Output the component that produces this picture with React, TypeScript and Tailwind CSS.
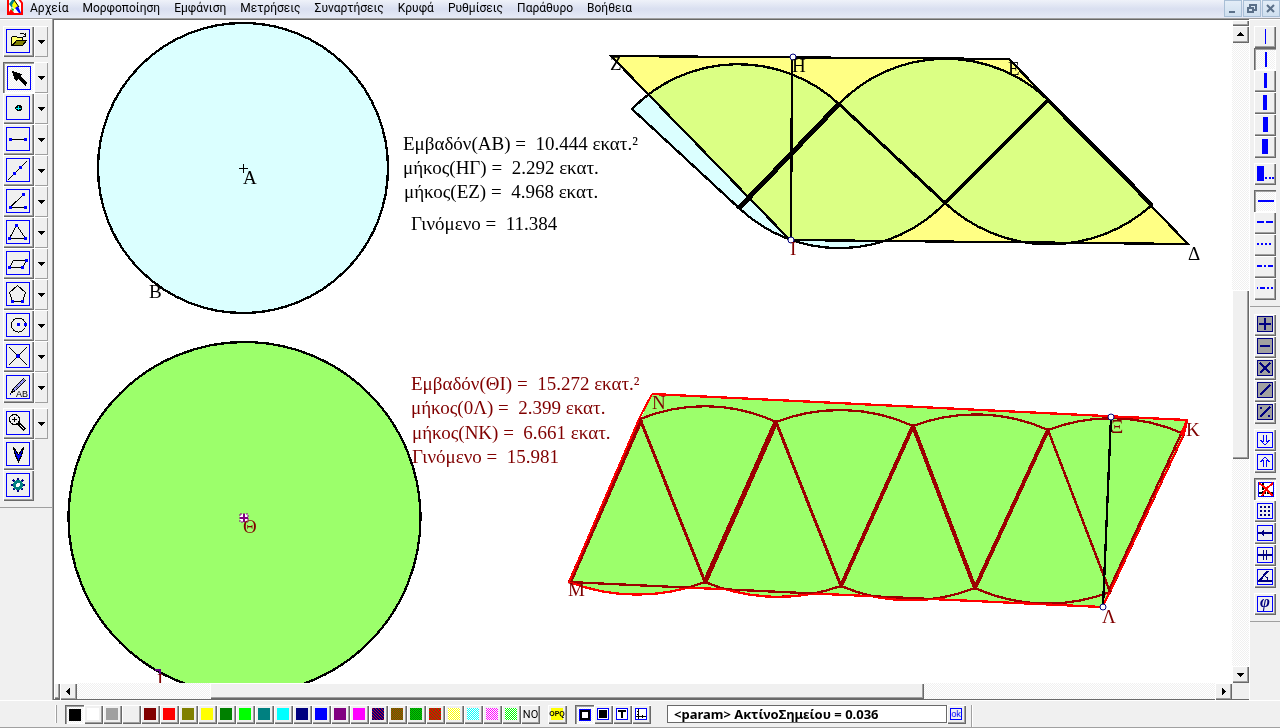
import React from "react";

const MENUS = [
  "Αρχεία",
  "Μορφοποίηση",
  "Εμφάνιση",
  "Μετρήσεις",
  "Συναρτήσεις",
  "Κρυφά",
  "Ρυθμίσεις",
  "Παράθυρο",
  "Βοήθεια",
];

const RAISED = "bg-[#f0f0f0] shadow-[inset_1px_1px_0_#fff,inset_-1px_-1px_0_#696969,inset_-2px_-2px_0_#a0a0a0]";
const PRESSED =
  "bg-[repeating-conic-gradient(#fff_0_25%,#f0f0f0_0_50%)] bg-[length:2px_2px] shadow-[inset_1px_1px_0_#696969,inset_2px_2px_0_#a0a0a0,inset_-1px_-1px_0_#fff]";
const TRACK = "bg-[repeating-conic-gradient(#fff_0_25%,#f0f0f0_0_50%)] bg-[length:2px_2px]";

function Dot({ x, y }: { x: number; y: number }) {
  return <rect x={x - 1} y={y - 1} width="3" height="3" fill="#00f" stroke="none" />;
}

type Tool = { label: string; icon: React.ReactNode; menu?: boolean; pressed?: boolean };

const FILE_TOOLS: Tool[] = [
  {
    label: "Άνοιγμα",
    menu: true,
    icon: (
      <>
        <path d="M5.500 16.500V8.500L6.500 7.500H10.500L11.500 8.500H16.500V11.500H10.500L5.500 16.500Z" fill="#ffff6b" />
        <path d="M6.500 16.500L10.500 11.500H20.500L16.500 16.500Z" fill="#808000" />
        <path d="M13.500 5.500L14.500 4.500H17.500L19.500 6.500M19.500 4V7.500M16.500 7.500H20" />
      </>
    ),
  },
];

const DRAW_TOOLS: Tool[] = [
  {
    label: "Επιλογή",
    menu: true,
    pressed: true,
    icon: <path d="M5 5L15 8L13 10L20 17L19 20L17 19L11 13L9 15L8 14Z" fill="#000" stroke="none" />,
  },
  {
    label: "Σημείο",
    menu: true,
    icon: (
      <>
        <path d="M11 9H14L16 11V13L14 15H11L9 13V11Z" fill="#000" stroke="none" />
        <path d="M12.500 10V14M10 12.500H15" stroke="#0ff" />
      </>
    ),
  },
  {
    label: "Τμήμα",
    menu: true,
    icon: (
      <>
        <path d="M4 12.500H20" />
        <Dot x={4} y={12} />
        <Dot x={19} y={12} />
      </>
    ),
  },
  {
    label: "Ευθεία",
    menu: true,
    icon: (
      <>
        <path d="M2 22L21 3" />
        <Dot x={8} y={15} />
        <Dot x={14} y={9} />
      </>
    ),
  },
  {
    label: "Γωνία",
    menu: true,
    icon: (
      <>
        <path d="M18 5L4 18.500H20" />
        <Dot x={4} y={18} />
        <Dot x={19} y={18} />
        <Dot x={17} y={5} />
      </>
    ),
  },
  {
    label: "Τρίγωνο",
    menu: true,
    icon: (
      <>
        <path d="M10.500 5L3.500 18.500H19.500Z" />
        <Dot x={10} y={5} />
        <Dot x={3} y={18} />
        <Dot x={19} y={18} />
      </>
    ),
  },
  {
    label: "Παραλληλόγραμμο",
    menu: true,
    icon: (
      <>
        <path d="M3.500 16.500H16.500L20.500 9.500H7.500Z" />
        <Dot x={3} y={16} />
        <Dot x={16} y={16} />
        <Dot x={20} y={9} />
      </>
    ),
  },
  {
    label: "Πολύγωνο",
    menu: true,
    icon: (
      <>
        <path d="M6.500 19.500H16.500L19.500 10.500L11.500 3.500L3.500 10.500Z" />
        <Dot x={6} y={19} />
        <Dot x={16} y={19} />
      </>
    ),
  },
  {
    label: "Κύκλος",
    menu: true,
    icon: (
      <>
        <circle cx="12.500" cy="12" r="7" fill="none" />
        <Dot x={12} y={11} />
        <Dot x={19} y={11} />
      </>
    ),
  },
  {
    label: "Τομή",
    menu: true,
    icon: (
      <>
        <path d="M3 3L21 21M21 3L3 21" />
        <path d="M12 10L14 12L12 14L10 12Z" fill="#00f" stroke="#00f" />
      </>
    ),
  },
  {
    label: "Ονομασία",
    menu: true,
    icon: (
      <>
        <path d="M5.500 17.500L7.500 13.500L17.500 3.500L19.500 5.500L9.500 15.500Z" fill="#9c9cff" />
        <path d="M8.500 14.500L18.500 4.500" stroke="#606060" strokeDasharray="1 1" />
        <path d="M4 19.500H5" stroke="#00f" />
        <text x="10" y="22" fontSize="9" fill="#000" stroke="none" className="font-['Liberation_Sans']">
          AB
        </text>
      </>
    ),
  },
];

const VIEW_TOOLS: Tool[] = [
  {
    label: "Μεγέθυνση",
    menu: true,
    icon: (
      <>
        <circle cx="8.500" cy="8.500" r="5" fill="none" />
        <path d="M6 8.500H11M8.500 6V11" />
        <path d="M12.500 12.500L19 19" strokeWidth="3" />
        <path d="M14 14L18 18" stroke="#fff" />
      </>
    ),
  },
  {
    label: "Διάνυσμα",
    icon: <path d="M7.500 5.500L9.500 13.500L12.500 19.500L15.500 13.500L17.500 5.500L12.500 12.500Z" fill="#00f" />,
  },
  {
    label: "Ρυθμίσεις",
    icon: (
      <>
        <path d="M12 5V19M5 12H19M7 7L17 17M17 7L7 17" stroke="#000080" strokeWidth="2" />
        <circle cx="12" cy="12" r="3.500" fill="#fff" stroke="#008080" strokeWidth="3" />
      </>
    ),
  },
];

function ToolButton({ tool }: { tool: Tool }) {
  return (
    <div className="flex h-[31px]">
      <button
        type="button"
        aria-label={tool.label}
        className={`flex w-[31px] shrink-0 items-start ${tool.pressed ? `${PRESSED} pt-1 pl-1` : `${RAISED} pt-[3px] pl-[3px]`}`}
      >
        <svg
          className="block size-6 shrink-0 border border-[#00f]"
          viewBox="1 1 22 22"
          fill="none"
          stroke="#000"
          shapeRendering="crispEdges"
        >
          {tool.icon}
        </svg>
      </button>
      {tool.menu && (
        <button
          type="button"
          aria-label={`${tool.label} ▾`}
          className="flex w-3.5 items-center justify-center bg-[#f0f0f0] shadow-[inset_1px_1px_0_#fff,inset_-1px_0_0_#a0a0a0,inset_0_-1px_0_#a0a0a0]"
        >
          <svg className="h-1 w-[7px]" viewBox="0 0 7 4" shapeRendering="crispEdges">
            <path d="M0 0H7L3.500 4Z" />
          </svg>
        </button>
      )}
    </div>
  );
}

const WIDTHS: React.ReactNode[] = [
  <path key="w" d="M11.500 3V18" stroke="#00f" strokeWidth="1" />,
  <path key="w" d="M12 4V19" stroke="#00f" strokeWidth="2" />,
  <path key="w" d="M11.500 3V18" stroke="#00f" strokeWidth="3" />,
  <path key="w" d="M11 3V18" stroke="#00f" strokeWidth="4" />,
  <path key="w" d="M11.500 3V18" stroke="#00f" strokeWidth="5" />,
  <path key="w" d="M11 3V18" stroke="#00f" strokeWidth="6" />,
];

const MORE_WIDTHS: React.ReactNode[] = [
  <path key="m" d="M3 3H10V18H3ZM11 14H13V16H11ZM15 14H17V16H15ZM18 14H20V16H18Z" fill="#00f" />,
];

const DASHES: React.ReactNode[] = [
  <path key="d" d="M4 11H20" stroke="#00f" strokeWidth="2" />,
  <path key="d" d="M3 10H10M12 10H19" stroke="#00f" strokeWidth="2" />,
  <path key="d" d="M3 10H5M7 10H9M11 10H13M15 10H17" stroke="#00f" strokeWidth="2" />,
  <path key="d" d="M3 10H8M10 10H12M14 10H19" stroke="#00f" strokeWidth="2" />,
  <path key="d" d="M3 10H4M6 10H11M13 10H15M17 10H19" stroke="#00f" strokeWidth="2" />,
];

function NavyBox({ d }: { d: string }) {
  return (
    <>
      <rect x="3.500" y="2.500" width="15" height="15" fill="#a0a0a0" stroke="#000080" />
      <path d={d} stroke="#000080" strokeWidth="2" fill="none" />
    </>
  );
}

function BlueBox({ children }: { children: React.ReactNode }) {
  return (
    <>
      <rect x="3.500" y="3.500" width="15" height="15" fill="#f0f0f0" stroke="#00f" />
      {children}
    </>
  );
}

const OPERATIONS: React.ReactNode[] = [
  <NavyBox key="o" d="M5 10H17M11 4V16" />,
  <NavyBox key="o" d="M6 10H16" />,
  <NavyBox key="o" d="M6 5L16 15M16 5L6 15" />,
  <NavyBox key="o" d="M6 15L16 5" />,
  <NavyBox key="o" d="M6 15L16 5M6 6H8M14 14H16" />,
];

const LAYERS: React.ReactNode[] = [
  <BlueBox key="l">
    <path d="M9.500 6V13M12.500 6V13M6.500 11L11 16L15.500 11" stroke="#00f" />
  </BlueBox>,
  <BlueBox key="l">
    <path d="M9.500 16V9M12.500 16V9M6.500 11L11 6L15.500 11" stroke="#00f" />
  </BlueBox>,
];

const GRID: React.ReactNode[] = [
  <React.Fragment key="g">
    <rect x="4.500" y="4.500" width="15" height="14" fill="#fff" stroke="#00f" />
    <path d="M8.500 5V18M5 14.500H19" stroke="#000" strokeWidth="2" strokeDasharray="3 1" />
    <path d="M5 5L10 9L19 18M19 5L12 11L8 18" stroke="#f00" strokeWidth="2" />
  </React.Fragment>,
  <BlueBox key="g">
    <path d="M6 7H8M10 7H12M14 7H16M6 11H8M10 11H12M14 11H16M6 15H8M10 15H12M14 15H16" stroke="#000080" strokeWidth="2" />
  </BlueBox>,
  <BlueBox key="g">
    <path d="M4 11H18" stroke="#000080" strokeWidth="2" />
    <path d="M6 11L10 8V14Z" fill="#000080" />
  </BlueBox>,
  <BlueBox key="g">
    <path d="M4 11H18" stroke="#000080" strokeWidth="2" />
    <path d="M9.500 6V16M12.500 6V16" stroke="#000080" />
  </BlueBox>,
  <BlueBox key="g">
    <path d="M4 15H18M5 15L14 5" stroke="#000080" strokeWidth="2" />
    <path d="M10.500 9.500L13.500 12V15" stroke="#000080" />
  </BlueBox>,
];

const SYMBOLS: React.ReactNode[] = [
  <BlueBox key="s">
    <text
      x="11"
      y="14"
      textAnchor="middle"
      fontSize="17"
      fontWeight="bold"
      fontStyle="italic"
      fill="#000080"
      className="font-['Liberation_Serif']"
    >
      φ
    </text>
  </BlueBox>,
];

function SideGroup({ label, icons, pressed }: { label: string; icons: React.ReactNode[]; pressed?: number }) {
  return (
    <div className="flex flex-col" role="group" aria-label={label}>
      {icons.map((icon, i) => (
        <button
          key={i}
          type="button"
          aria-label={`${label} ${i + 1}`}
          className={`size-[22px] ${i === pressed ? PRESSED : RAISED}`}
        >
          <svg className="block size-[22px]" viewBox="0 0 22 22" fill="none" shapeRendering="crispEdges">
            {icon}
          </svg>
        </button>
      ))}
    </div>
  );
}

type Swatch = { base: string; dots?: string; diagonal?: boolean };

const SWATCHES: Swatch[] = [
  { base: "#000000" },
  { base: "#ffffff" },
  { base: "#a0a0a0" },
  { base: "#f0f0f0" },
  { base: "#800000" },
  { base: "#ff0000" },
  { base: "#808000" },
  { base: "#ffff00" },
  { base: "#008000" },
  { base: "#00ff00" },
  { base: "#008080" },
  { base: "#00ffff" },
  { base: "#000080" },
  { base: "#0000ff" },
  { base: "#800080" },
  { base: "#ff00ff" },
  { base: "#000080", dots: "#d00020", diagonal: true },
  { base: "#c03000", dots: "#408000" },
  { base: "#00d000", dots: "#008000" },
  { base: "#e80000", dots: "#408000", diagonal: true },
  { base: "#ffffff", dots: "#ffff00" },
  { base: "#ffffff", dots: "#00ffff" },
  { base: "#ffffff", dots: "#ff00ff" },
  { base: "#ffffff", dots: "#00ff00" },
];

/* Even cells carry the dot colour on a checkerboard, or on every third diagonal. */
function hatchPath(diagonal?: boolean) {
  const cells: string[] = [];
  for (let y = 0; y < 12; y++) {
    for (let x = 0; x < 12; x++) {
      if (diagonal ? (x - y + 12) % 3 === 0 : (x + y) % 2 === 0) cells.push(`M${x} ${y}h1v1h-1z`);
    }
  }
  return cells.join("");
}

function SwatchIcon({ swatch }: { swatch: Swatch }) {
  return (
    <svg className="block size-3 shrink-0" viewBox="0 0 12 12" shapeRendering="crispEdges">
      <rect width="12" height="12" fill={swatch.base} />
      {swatch.dots && <path d={hatchPath(swatch.diagonal)} fill={swatch.dots} />}
    </svg>
  );
}

const MODES: React.ReactNode[] = [
  <React.Fragment key="m">
    <rect x="4" y="4" width="12" height="12" fill="#00f" />
    <rect x="5" y="5" width="10" height="10" fill="#000" />
    <rect x="7" y="7" width="6" height="6" fill="#fff" />
  </React.Fragment>,
  <React.Fragment key="m">
    <rect x="3.500" y="3.500" width="11" height="11" fill="#fff" stroke="#00f" />
    <rect x="5" y="5" width="8" height="8" fill="#000" />
  </React.Fragment>,
  <React.Fragment key="m">
    <rect x="3.500" y="3.500" width="11" height="11" fill="#fff" stroke="#00f" />
    <path d="M5 6H13M9 6V13" stroke="#000" strokeWidth="2" />
  </React.Fragment>,
  <React.Fragment key="m">
    <rect x="3.500" y="3.500" width="11" height="11" fill="#fff" stroke="#00f" />
    <path d="M6.500 4V14M4 11.500H14M5 6.500H6M5 9.500H6M10.500 10V13" stroke="#000" />
  </React.Fragment>,
];

const UPPER_SECTORS = [
  "M740 209L632 109A148 148 0 0 1 839 104Z",
  "M839 104L740 209A146 146 0 0 0 945 203Z",
  "M945 203L839 104A148 148 0 0 1 1048 100Z",
  "M1048 100L945 203A153 153 0 0 0 1152 205Z",
];

const LOWER_SECTORS = [
  "M640 419L569 582A190 190 0 0 0 705 582Z",
  "M705 582L640 419A170 170 0 0 1 776 422Z",
  "M776 422L705 582A188 188 0 0 0 841 586Z",
  "M841 586L776 422A176 176 0 0 1 913 426Z",
  "M913 426L841 586A176 176 0 0 0 975 588Z",
  "M975 588L913 426A176 176 0 0 1 1048 430Z",
  "M1048 430L975 588A176 176 0 0 0 1110 592Z",
  "M1110 592L1048 430A176 176 0 0 1 1184 434Z",
];

const LABELS: { x: number; y: number; text: string; red?: boolean }[] = [
  { x: 243, y: 184, text: "Α" },
  { x: 149, y: 298, text: "Β" },
  { x: 610, y: 70, text: "Ζ" },
  { x: 792, y: 72, text: "Η" },
  { x: 1008, y: 75, text: "Ε" },
  { x: 1188, y: 260, text: "Δ" },
  { x: 790, y: 255, text: "Ι", red: true },
  { x: 652, y: 409, text: "Ν", red: true },
  { x: 1111, y: 433, text: "Ξ", red: true },
  { x: 1186, y: 436, text: "Κ", red: true },
  { x: 1102, y: 623, text: "Λ", red: true },
  { x: 568, y: 596, text: "Μ", red: true },
  { x: 243, y: 533, text: "Θ", red: true },
  { x: 157, y: 687, text: "Ι", red: true },
  { x: 403, y: 150, text: "Εμβαδόν(ΑΒ) =  10.444 εκατ.²" },
  { x: 403, y: 174, text: "μήκος(ΗΓ) =  2.292 εκατ." },
  { x: 404, y: 198, text: "μήκος(ΕΖ) =  4.968 εκατ." },
  { x: 411, y: 230, text: "Γινόμενο =  11.384" },
  { x: 411, y: 390, text: "Εμβαδόν(ΘΙ) =  15.272 εκατ.²", red: true },
  { x: 411, y: 414, text: "μήκος(0Λ) =  2.399 εκατ.", red: true },
  { x: 412, y: 439, text: "μήκος(ΝΚ) =  6.661 εκατ.", red: true },
  { x: 412, y: 463, text: "Γινόμενο =  15.981", red: true },
];

function Drawing() {
  return (
    <svg
      className="block size-full"
      viewBox="54 20 1178 663"
      preserveAspectRatio="xMinYMin slice"
      fill="none"
      role="img"
      aria-label="Εμβαδόν κύκλου"
    >
      <defs>
        <clipPath id="inside-sectors">
          <path d={LOWER_SECTORS.join("")} />
        </clipPath>
        <clipPath id="below-base">
          <path d="M566 582L1104 608V660H566Z" />
        </clipPath>
      </defs>
      <g strokeWidth="2.300" shapeRendering="crispEdges">
        <circle cx="243" cy="168" r="145" fill="#dbffff" stroke="#000" />
        <circle cx="244.500" cy="518" r="176" fill="#9cff6b" stroke="#000" />

        {UPPER_SECTORS.map((d) => (
          <path key={d} d={d} fill="#dbffff" />
        ))}
        <path d="M611 56L1009 59L1188 244L790 240Z" fill="#ffff84" className="mix-blend-multiply" />
        <g stroke="#000">
          {UPPER_SECTORS.map((d) => (
            <path key={d} d={d} />
          ))}
          <path d="M611 56L1009 59L1188 244L790 240Z" />
          <path d="M792 57L791 240" />
          <path d="M738 209L839 104" strokeWidth="5" />
          <path d="M839 104L945 203" strokeWidth="3" />
          <path d="M945 203L1048 100" strokeWidth="4" />
          <path d="M1048 100L1152 205" strokeWidth="4" />
        </g>

        <path d="M652 394L1187 420L1102 607L569 582Z" fill="#9cff6b" />
        {LOWER_SECTORS.map((d) => (
          <path key={d} d={d} fill="#9cff6b" stroke="#9c0000" />
        ))}
        <path d="M652 394L1187 420L1184 434M1110 592L1102 607L569 582" stroke="#f00" />
        <path d="M569 582L1102 607" stroke="#9c0000" clipPath="url(#inside-sectors)" />
        <path d="M642 420L571 582M1181 434L1109 590" stroke="#9c0000" />
        <g clipPath="url(#below-base)" stroke="#f00">
          {LOWER_SECTORS.filter((_, i) => i % 2 === 0).map((d) => (
            <path key={d} d={d} />
          ))}
        </g>
        <path d="M569 582L639 419L652 394M1187 420L1181 434L1184 434L1110 592" stroke="#f00" strokeWidth="2" />
        <g stroke="#9c0000">
          <path d="M640 419L705 582" strokeWidth="3" />
          <path d="M776 422L705 582" strokeWidth="5" />
          <path d="M776 422L841 586" strokeWidth="3" />
          <path d="M913 426L841 586" strokeWidth="4" />
          <path d="M913 426L975 588" strokeWidth="4" />
          <path d="M1048 430L975 588" strokeWidth="4" />
          <path d="M1048 430L1110 592" strokeWidth="2.500" />
        </g>
        <path d="M1111 417L1103 607" stroke="#000" />
      </g>

      <path d="M239 168.500H248M243.500 164V173" stroke="#000" />
      <rect x="240" y="514" width="8" height="8" fill="#fff" stroke="#800080" strokeDasharray="2 1" />
      <path d="M240 518H248M244 514V522" stroke="#800080" strokeWidth="2" />
      <path d="M155 669H161V675H159V671H155Z" fill="#600080" />
      <path d="M154 672L158 676" stroke="#fff" strokeWidth="3" />
      {[
        [793, 57],
        [791, 240],
        [1111, 417],
        [1103, 607],
      ].map(([x, y]) => (
        <circle key={x} cx={x} cy={y} r="3" fill="#fff" stroke="#000080" />
      ))}

      <g className="font-['Liberation_Serif',serif] text-[19px]">
        {LABELS.map((l) => (
          <text key={`${l.x}-${l.y}`} x={l.x} y={l.y} className="whitespace-pre" fill={l.red ? "#800000" : "#000"}>
            {l.text}
          </text>
        ))}
      </g>
    </svg>
  );
}

function ArrowButton({ label, d }: { label: string; d: string }) {
  return (
    <button type="button" aria-label={label} className={`size-[17px] shrink-0 ${RAISED}`}>
      <svg className="block size-[17px]" viewBox="0 0 17 17" shapeRendering="crispEdges">
        <path d={d} />
      </svg>
    </button>
  );
}

function WindowButton({ label, d }: { label: string; d: string }) {
  return (
    <button
      type="button"
      aria-label={label}
      className="h-[17px] w-[18px] border border-[#a9bfd6] bg-linear-to-b from-[#e3edf7] to-[#cfdfef]"
    >
      <svg className="block h-[15px] w-4" viewBox="0 0 16 15" fill="none" stroke="#5b7089" strokeWidth="2">
        <path d={d} />
      </svg>
    </button>
  );
}

export default function App() {
  return (
    <div className="flex h-screen flex-col overflow-hidden bg-[#f0f0f0] font-['Open_Sans','Noto_Sans',sans-serif] text-black">
      <header className="flex h-[18px] shrink-0 justify-between bg-linear-to-b from-[#eff2f9] via-[#d9dff0] to-[#e6eaf6]">
        <nav className="flex items-center" aria-label="Μενού">
          <svg className="ml-[7px] h-4 w-4 self-start" viewBox="0 0 16 16">
            <path d="M1 -1H12L15 3V14H1Z" fill="#fff" stroke="#f00" strokeWidth="2" />
            <path d="M2 4L5 0H8L5 8Z" fill="#008080" />
            <path d="M5 5L8 0L12 7L7 9Z" fill="#ff0" />
            <path d="M8 8L11 6L14 13H12Z" fill="#00f" />
            <path d="M4 8L7 9L6 12Z" fill="#0c0" />
            <path d="M2 14V12L4 9L8 14H6L5 13H4V14Z" fill="#f00" />
            <path d="M7 0L12 7" stroke="#000" />
          </svg>
          {MENUS.map((m) => (
            <button
              key={m}
              type="button"
              className="px-[7px] pb-0.5 font-['Roboto','Noto_Sans',sans-serif] text-[12px] leading-4 whitespace-nowrap"
            >
              {m}
            </button>
          ))}
        </nav>
        <div className="flex gap-px">
          <WindowButton label="Ελαχιστοποίηση" d="M4 11H10" />
          <WindowButton label="Επαναφορά" d="M6 6V4H12V9H10M4 7H9V11H4Z" />
          <WindowButton label="Κλείσιμο" d="M4 4L11 11M11 4L4 11" />
        </div>
      </header>

      <main className="flex min-h-0 flex-1 border-t border-[#a0a0a0]">
        <aside className="flex w-[52px] shrink-0 flex-col border-t border-white pt-1.5">
          <div className="flex flex-col gap-[5px] border-b border-[#a0a0a0] pb-1.5 pl-[3px]">
            <div>
              {FILE_TOOLS.map((t) => (
                <ToolButton key={t.label} tool={t} />
              ))}
            </div>
            <div>
              {DRAW_TOOLS.map((t) => (
                <ToolButton key={t.label} tool={t} />
              ))}
            </div>
            <div>
              {VIEW_TOOLS.map((t) => (
                <ToolButton key={t.label} tool={t} />
              ))}
            </div>
          </div>
        </aside>

        <section className="flex min-w-0 flex-1 flex-col border-l border-[#a0a0a0]">
          <div className="flex min-h-0 flex-1 border-t border-l border-[#696969]">
            <div className="min-h-0 min-w-0 flex-1 overflow-hidden bg-white">
              <Drawing />
            </div>
            <div className={`flex w-[17px] flex-col ${TRACK}`}>
              <div className={`h-1.5 ${RAISED}`} />
              <ArrowButton label="Πάνω" d="M5 10H12L8.500 6Z" />
              <div className="flex-[247]" />
              <div className={`flex-[169] ${RAISED}`} />
              <div className="flex-[207]" />
              <ArrowButton label="Κάτω" d="M5 7H12L8.500 11Z" />
            </div>
          </div>
          <div className="flex h-[17px] shrink-0 border-b border-l border-[#696969]">
            <div className={`flex min-w-0 flex-1 ${TRACK}`}>
              <div className={`w-1.5 ${RAISED}`} />
              <ArrowButton label="Αριστερά" d="M10 5V12L6 8.500Z" />
              <div className="flex-[133]" />
              <div className={`flex-[714] ${RAISED}`} />
              <div className="flex-[291]" />
              <ArrowButton label="Δεξιά" d="M7 5V12L11 8.500Z" />
            </div>
            <div className="w-[17px] bg-[#f0f0f0]" />
          </div>
        </section>

        <aside className="flex w-[31px] shrink-0 flex-col border-t border-l border-white pt-1.5">
          <div className="flex flex-col gap-[5px] border-b border-[#a0a0a0] pb-1.5 pl-1">
            <SideGroup label="Πάχος" icons={WIDTHS} pressed={1} />
            <SideGroup label="Άλλο πάχος" icons={MORE_WIDTHS} />
            <SideGroup label="Γραμμή" icons={DASHES} pressed={0} />
          </div>
          <div className="flex flex-col gap-[5px] border-b border-[#a0a0a0] pt-[7px] pb-1.5 pl-1">
            <SideGroup label="Πράξη" icons={OPERATIONS} />
            <SideGroup label="Επίπεδο" icons={LAYERS} />
            <SideGroup label="Άξονες" icons={GRID} pressed={0} />
            <SideGroup label="Σύμβολο" icons={SYMBOLS} />
          </div>
        </aside>
      </main>

      <footer className="flex h-7 shrink-0 items-start border-t border-b border-t-white border-b-[#a0a0a0] pt-1">
        <div className="mr-2 ml-[55px] h-[18px] w-0.5 border-r border-l border-l-white border-r-[#a0a0a0]" />
        <div className="flex">
          {SWATCHES.map((s, i) => (
            <button
              key={i}
              type="button"
              aria-label={`Χρώμα ${i + 1}`}
              className={`flex size-[19px] items-start ${i === 0 ? `${PRESSED} pt-1 pl-1` : `${RAISED} pt-[3px] pl-[3px]`}`}
            >
              <SwatchIcon swatch={s} />
            </button>
          ))}
          <button
            type="button"
            className={`flex size-[19px] items-center justify-center ${RAISED} font-['Roboto','Liberation_Sans'] text-[11px] leading-none`}
          >
            NO
          </button>
        </div>
        <button
          type="button"
          className={`ml-2 flex size-[19px] items-start p-[3px] ${RAISED} font-['Liberation_Sans'] text-[7px] leading-3 font-bold`}
        >
          <span className="flex size-3 shrink-0 justify-center bg-[#ff0]">OPQ</span>
        </button>
        <div className="ml-2 flex">
          {MODES.map((icon, i) => (
            <button
              key={i}
              type="button"
              aria-label={`Εμφάνιση ${i + 1}`}
              className={`size-[19px] ${i === 0 ? PRESSED : RAISED}`}
            >
              <svg className="block size-[19px]" viewBox="0 0 19 19" fill="none" shapeRendering="crispEdges">
                {icon}
              </svg>
            </button>
          ))}
        </div>
        <input
          type="text"
          aria-label="Παράμετρος"
          defaultValue="<param> ΑκτίνοΣημείου = 0.036"
          className="ml-4 h-[18px] w-[280px] rounded-none border border-[#696969] bg-white px-1.5 font-['Noto_Sans',sans-serif] text-[13px] leading-4 font-bold"
        />
        <button
          type="button"
          className={`flex size-[19px] items-start p-[3px] ${RAISED} font-['Liberation_Sans'] text-[9px] leading-[9px] text-[#00f]`}
        >
          <span className="flex size-3 shrink-0 items-center justify-center border border-[#00f]">ok</span>
        </button>
        <div className="ml-[5px] h-[22px] w-0.5 border-r border-l border-l-[#a0a0a0] border-r-white" />
      </footer>
    </div>
  );
}
